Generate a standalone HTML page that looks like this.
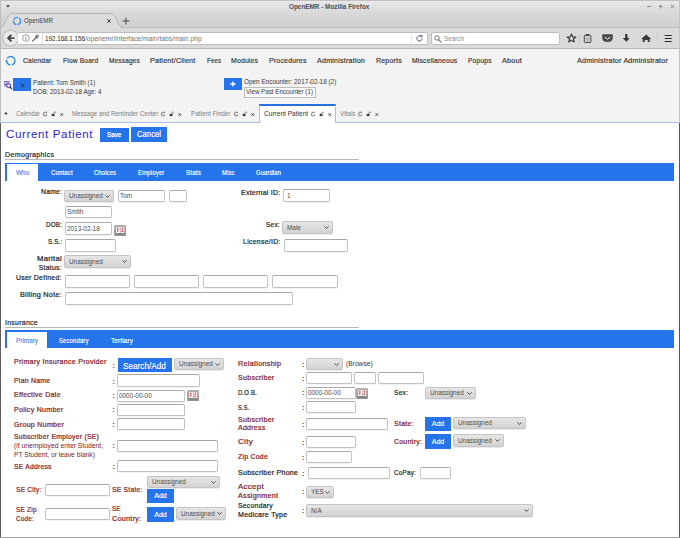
<!DOCTYPE html>
<html><head><meta charset="utf-8"><style>
html,body{margin:0;padding:0;width:680px;height:538px;overflow:hidden;background:#fff;}
body{position:relative;font-family:"Liberation Sans",sans-serif;}
body>div,body>svg{position:absolute;white-space:nowrap;}
</style></head><body>
<div style="left:0px;top:0px;width:680px;height:28px;background:linear-gradient(#e9e9e9,#d8d8d8 50%,#cfcfcf);border-radius:4px 4px 0 0;"></div>
<div style="left:0px;top:0px;width:680px;height:1px;background:#c2c2c2;border-radius:4px 4px 0 0;"></div>
<div style="left:288.75px;top:3.44px;font-size:6.40px;line-height:7.36px;color:#505050;font-weight:bold;transform:scaleX(0.9973);transform-origin:0 0;">OpenEMR - Mozilla Firefox</div>
<svg style="left:6px;top:5px" width="4" height="3" viewBox="0 0 4 3"><path d="M0 0.3 L4 0.3 L2 2.6Z" fill="#333"/></svg>
<svg style="left:646px;top:3px" width="30" height="7" viewBox="0 0 30 7"><path d="M1.2 3.5 H5.2" stroke="#777" stroke-width="0.8"/><path d="M14.7 1.5 V5.5 M12.7 3.5 H16.7" stroke="#777" stroke-width="0.8"/><path d="M24.7 1.7 L28.3 5.3 M28.3 1.7 L24.7 5.3" stroke="#777" stroke-width="0.8"/></svg>
<div style="left:0px;top:27px;width:680px;height:21px;background:#dadada;border-top:1px solid #bcbcbc;border-bottom:1px solid #b8b8b8;box-sizing:content-box;height:20px"></div>
<svg style="left:0px;top:12px" width="126" height="17" viewBox="0 0 126 17"><path d="M0 16 C5.5 16 6 1.5 12.5 1.5 L110.5 1.5 C117 1.5 117.5 16 123 16 L123 17 L0 17Z" fill="#dcdcdc" stroke="none"/><path d="M0 15.5 C5.5 15.5 6 1.5 12.5 1.5 L110.5 1.5 C117 1.5 117.5 15.5 123 15.5" fill="none" stroke="#b4b4b4" stroke-width="1"/></svg>
<div style="left:0px;top:28px;width:680px;height:1px;background:#dadada;"></div>
<svg style="left:12px;top:16px" width="10" height="10" viewBox="0 0 10 10"><circle cx="5" cy="5" r="3.6" fill="none" stroke="#3a8ee6" stroke-width="1.3" stroke-dasharray="5 1.2"/></svg>
<div style="left:24.00px;top:16.98px;font-size:7.40px;line-height:8.51px;color:#3c3c3c;transform:scaleX(0.8394);transform-origin:0 0;">OpenEMR</div>
<svg style="left:106px;top:18px" width="6" height="6" viewBox="0 0 6 6"><path d="M1.2 1.2 L4.8 4.8 M4.8 1.2 L1.2 4.8" stroke="#333" stroke-width="0.9"/></svg>
<svg style="left:122px;top:16.5px" width="8" height="8" viewBox="0 0 8 8"><path d="M4 0.5 V7.5 M0.5 4 H7.5" stroke="#444" stroke-width="1"/></svg>
<svg style="left:1px;top:29px" width="20" height="19" viewBox="0 0 20 19"><circle cx="9.6" cy="9.1" r="7.9" fill="#e9e9e9" stroke="#a9a9a9" stroke-width="0.8"/><path d="M13.4 9.1 H8" fill="none" stroke="#3a3a3a" stroke-width="1.5"/><path d="M10.4 5.9 L7.2 9.1 L10.4 12.3" fill="none" stroke="#3a3a3a" stroke-width="1.9"/></svg>
<div style="left:18px;top:32px;width:410px;height:13px;background:#fff;border:1px solid #bdbdbd;border-left:none;box-sizing:border-box;border-radius:0 2px 2px 0;"></div>
<svg style="left:21px;top:33px" width="20" height="10" viewBox="0 0 20 10"><circle cx="4.9" cy="5" r="3.3" fill="none" stroke="#777" stroke-width="0.7"/><path d="M4.9 4 V7" stroke="#777" stroke-width="0.8"/><circle cx="4.9" cy="3" r="0.4" fill="#777"/><ellipse cx="16" cy="3.5" rx="2.1" ry="1.6" transform="rotate(-45 16 3.5)" fill="#6a6a6a"/><circle cx="16.4" cy="3.1" r="0.6" fill="#fff"/><path d="M14.6 5 L11.2 8.4" stroke="#6a6a6a" stroke-width="1.3"/></svg>
<div style="left:42px;top:33px;width:1px;height:11px;background:#dcdcdc;"></div>
<div style="left:45.00px;top:34.76px;font-size:7.80px;line-height:8.97px;color:#222;transform:scaleX(0.8019);transform-origin:0 0;">192.168.1.156</div>
<div style="left:85.30px;top:34.76px;font-size:7.80px;line-height:8.97px;color:#737373;transform:scaleX(0.8627);transform-origin:0 0;">/openemr/interface/main/tabs/main.php</div>
<div style="left:411px;top:34px;width:1px;height:9px;background:#e4e4e4;"></div>
<svg style="left:415px;top:34px" width="9" height="9" viewBox="0 0 9 9"><path d="M7 4.5 A2.6 2.6 0 1 1 5.8 2.3" fill="none" stroke="#557" stroke-width="1"/><path d="M4.8 1 L7.6 1.2 L7 3.8Z" fill="#557"/></svg>
<div style="left:431px;top:32px;width:129px;height:13px;background:#fff;border:1px solid #bdbdbd;box-sizing:border-box;border-radius:2px;"></div>
<svg style="left:434px;top:34.5px" width="8" height="8" viewBox="0 0 8 8"><circle cx="3" cy="3" r="2.2" fill="none" stroke="#666" stroke-width="0.9"/><path d="M4.6 4.6 L7.3 7.3" stroke="#666" stroke-width="1.1"/></svg>
<div style="left:444.00px;top:34.86px;font-size:7.80px;line-height:8.97px;color:#8a8a8a;transform:scaleX(0.8093);transform-origin:0 0;">Search</div>
<svg style="left:566px;top:32px" width="110" height="13" viewBox="0 0 110 13"><path d="M5.5 2 L6.7 4.9 L9.8 5.1 L7.4 7 L8.2 10 L5.5 8.4 L2.8 10 L3.6 7 L1.2 5.1 L4.3 4.9Z" fill="none" stroke="#333" stroke-width="1.1" stroke-linejoin="round"/><rect x="13" y="1.5" width="0.8" height="10" fill="#c8c8c8"/><rect x="18.3" y="3.2" width="6.6" height="7.3" rx="0.8" fill="none" stroke="#4a4a4a" stroke-width="1"/><rect x="20" y="2" width="3.2" height="2" fill="#4a4a4a"/><path d="M20.2 5.5 V9.3 M21.6 5.5 V9.3 M23 5.5 V9.3" stroke="#888" stroke-width="0.6"/><path d="M37 2.3 H46 Q46.8 2.3 46.8 3.2 V5.5 Q46.8 10 41.5 10 Q36.2 10 36.2 5.5 V3.2 Q36.2 2.3 37 2.3Z" fill="#4a4a4a"/><path d="M39 5 L41.5 7.3 L44 5" fill="none" stroke="#fff" stroke-width="1"/><path d="M60.3 2 V7" stroke="#333" stroke-width="2.2"/><path d="M56.8 6 L60.3 9.8 L63.8 6Z" fill="#333"/><path d="M80.2 2.5 L85.2 7 H83.7 V10 H81.7 V8 H78.7 V10 H76.7 V7 H75.2Z" fill="#3a3a3a"/><rect x="91" y="1.5" width="0.8" height="10" fill="#c8c8c8"/><path d="M98.7 3.5 H105.7 M98.7 6.5 H105.7 M98.7 9.5 H105.7" stroke="#2a2a2a" stroke-width="1.2"/></svg>
<div style="left:0px;top:0px;width:1px;height:123px;background:#bdbdbd;"></div>
<div style="left:679px;top:0px;width:1px;height:123px;background:#c4c4c4;"></div>
<div style="left:0px;top:123px;width:1px;height:415px;background:#5e5e5e;"></div>
<div style="left:679px;top:123px;width:1px;height:415px;background:#555;"></div>
<div style="left:1px;top:49px;width:678px;height:73px;background:#f3f3f3;"></div>
<div style="left:1px;top:122px;width:678px;height:1px;background:#a9bff0;"></div>
<div style="left:1px;top:123px;width:678px;height:414px;background:#fff;"></div>
<div style="left:0px;top:537px;width:680px;height:1px;background:#a0a0a0;"></div>
<svg style="left:5px;top:55px" width="12" height="12" viewBox="0 0 12 12"><circle cx="5.7" cy="5.7" r="4.2" fill="none" stroke="#2a8ae0" stroke-width="1.4" stroke-dasharray="9.5 1.5 7 1.5 7 1.5" transform="rotate(-60 5.7 5.7)"/></svg>
<div style="left:23.00px;top:56.10px;font-size:7.90px;line-height:9.08px;color:#3a3a3a;transform:scaleX(0.8467);transform-origin:0 0;letter-spacing:0.2px;-webkit-text-stroke:0.2px #3a3a3a;">Calendar</div>
<div style="left:62.60px;top:56.10px;font-size:7.90px;line-height:9.08px;color:#3a3a3a;transform:scaleX(0.8438);transform-origin:0 0;letter-spacing:0.2px;-webkit-text-stroke:0.2px #3a3a3a;">Flow Board</div>
<div style="left:108.70px;top:56.10px;font-size:7.90px;line-height:9.08px;color:#3a3a3a;transform:scaleX(0.8244);transform-origin:0 0;letter-spacing:0.2px;-webkit-text-stroke:0.2px #3a3a3a;">Messages</div>
<div style="left:150.30px;top:56.10px;font-size:7.90px;line-height:9.08px;color:#3a3a3a;transform:scaleX(0.9139);transform-origin:0 0;letter-spacing:0.2px;-webkit-text-stroke:0.2px #3a3a3a;">Patient/Client</div>
<div style="left:206.60px;top:56.10px;font-size:7.90px;line-height:9.08px;color:#3a3a3a;transform:scaleX(0.7787);transform-origin:0 0;letter-spacing:0.2px;-webkit-text-stroke:0.2px #3a3a3a;">Fees</div>
<div style="left:231.00px;top:56.10px;font-size:7.90px;line-height:9.08px;color:#3a3a3a;transform:scaleX(0.8701);transform-origin:0 0;letter-spacing:0.2px;-webkit-text-stroke:0.2px #3a3a3a;">Modules</div>
<div style="left:268.70px;top:56.10px;font-size:7.90px;line-height:9.08px;color:#3a3a3a;transform:scaleX(0.8868);transform-origin:0 0;letter-spacing:0.2px;-webkit-text-stroke:0.2px #3a3a3a;">Procedures</div>
<div style="left:316.90px;top:56.10px;font-size:7.90px;line-height:9.08px;color:#3a3a3a;transform:scaleX(0.9100);transform-origin:0 0;letter-spacing:0.2px;-webkit-text-stroke:0.2px #3a3a3a;">Administration</div>
<div style="left:375.60px;top:56.10px;font-size:7.90px;line-height:9.08px;color:#3a3a3a;transform:scaleX(0.8912);transform-origin:0 0;letter-spacing:0.2px;-webkit-text-stroke:0.2px #3a3a3a;">Reports</div>
<div style="left:412.00px;top:56.10px;font-size:7.90px;line-height:9.08px;color:#3a3a3a;transform:scaleX(0.8641);transform-origin:0 0;letter-spacing:0.2px;-webkit-text-stroke:0.2px #3a3a3a;">Miscellaneous</div>
<div style="left:468.20px;top:56.10px;font-size:7.90px;line-height:9.08px;color:#3a3a3a;transform:scaleX(0.8466);transform-origin:0 0;letter-spacing:0.2px;-webkit-text-stroke:0.2px #3a3a3a;">Popups</div>
<div style="left:502.00px;top:56.10px;font-size:7.90px;line-height:9.08px;color:#3a3a3a;transform:scaleX(0.9194);transform-origin:0 0;letter-spacing:0.2px;-webkit-text-stroke:0.2px #3a3a3a;">About</div>
<div style="left:576.60px;top:56.10px;font-size:7.90px;line-height:9.08px;color:#3a3a3a;transform:scaleX(0.9089);transform-origin:0 0;letter-spacing:0.2px;-webkit-text-stroke:0.2px #3a3a3a;">Administrator Administrator</div>
<svg style="left:3px;top:80px" width="10" height="10" viewBox="0 0 10 10"><path d="M1 1.5 H6.5 M1 3 H6.5 M1 4.5 H4 M1 6 H3.5" stroke="#6a5ae0" stroke-width="0.9"/><circle cx="5.6" cy="5.6" r="2" fill="none" stroke="#2b2bb0" stroke-width="1"/><path d="M7 7 L9 9" stroke="#2b2bb0" stroke-width="1.2"/></svg>
<div style="left:13px;top:78px;width:18px;height:13px;background:#2674ec;"></div>
<svg style="left:19.5px;top:82.5px" width="5" height="5" viewBox="0 0 5 5"><path d="M0.6 0.6 L4.4 4.4 M4.4 0.6 L0.6 4.4" stroke="#2a2a2a" stroke-width="1"/></svg>
<div style="left:33.00px;top:79.03px;font-size:7.30px;line-height:8.39px;color:#383838;transform:scaleX(0.8643);transform-origin:0 0;">Patient: Tom Smith (1)</div>
<div style="left:33.00px;top:87.73px;font-size:7.30px;line-height:8.39px;color:#383838;transform:scaleX(0.8568);transform-origin:0 0;">DOB: 2013-02-18 Age: 4</div>
<div style="left:224px;top:78px;width:18px;height:12px;background:#2674ec;"></div>
<svg style="left:230px;top:81px" width="6" height="6" viewBox="0 0 6 6"><path d="M3 0.4 V5.6 M0.4 3 H5.6" stroke="#fff" stroke-width="1.4"/></svg>
<div style="left:244.20px;top:77.63px;font-size:7.30px;line-height:8.39px;color:#383838;transform:scaleX(0.8748);transform-origin:0 0;">Open Encounter: 2017-02-18 (2)</div>
<div style="left:244px;top:87px;width:72px;height:11px;background:#fbfbfb;border:1px solid #bdbdbd;box-sizing:border-box;"></div>
<div style="left:246.00px;top:88.43px;font-size:7.30px;line-height:8.39px;color:#383838;transform:scaleX(0.8526);transform-origin:0 0;">View Past Encounter (1)</div>
<svg style="left:4px;top:111.5px" width="4" height="3" viewBox="0 0 4 3"><path d="M0.2 2.3 L1.6 0.5 Q2 0.1 2.4 0.5 L3.6 2.3Z" fill="#222"/></svg>
<div style="left:15.50px;top:109.96px;font-size:6.90px;line-height:7.93px;color:#7e7e7e;transform:scaleX(0.8464);transform-origin:0 0;">Calendar</div>
<svg style="left:43px;top:111px" width="22" height="7" viewBox="0 0 22 7"><path d="M3.9 3.2 A1.9 1.9 0 1 1 3.1 1.6" fill="none" stroke="#666" stroke-width="0.8"/><path d="M2.6 0.5 L4.2 0.9 L3.7 2.2Z" fill="#666"/><path d="M0.9 3.8 A1.9 1.9 0 0 0 1.3 2.2" fill="none" stroke="#666" stroke-width="0.6"/><rect x="8.7" y="2.8" width="2.8" height="2.3" fill="#3a3a3a"/><path d="M11 2.8 V1.9 Q11 0.9 11.9 0.9 Q12.8 0.9 12.8 1.9" fill="none" stroke="#555" stroke-width="0.6"/><path d="M17.4 2.2 L20.1 4.9 M20.1 2.2 L17.4 4.9" stroke="#444" stroke-width="0.9"/></svg>
<div style="left:72.30px;top:109.96px;font-size:6.90px;line-height:7.93px;color:#7e7e7e;transform:scaleX(0.9016);transform-origin:0 0;">Message and Reminder Center</div>
<svg style="left:161px;top:111px" width="22" height="7" viewBox="0 0 22 7"><path d="M3.9 3.2 A1.9 1.9 0 1 1 3.1 1.6" fill="none" stroke="#666" stroke-width="0.8"/><path d="M2.6 0.5 L4.2 0.9 L3.7 2.2Z" fill="#666"/><path d="M0.9 3.8 A1.9 1.9 0 0 0 1.3 2.2" fill="none" stroke="#666" stroke-width="0.6"/><rect x="8.7" y="2.8" width="2.8" height="2.3" fill="#3a3a3a"/><path d="M11 2.8 V1.9 Q11 0.9 11.9 0.9 Q12.8 0.9 12.8 1.9" fill="none" stroke="#555" stroke-width="0.6"/><path d="M17.4 2.2 L20.1 4.9 M20.1 2.2 L17.4 4.9" stroke="#444" stroke-width="0.9"/></svg>
<div style="left:191.20px;top:109.96px;font-size:6.90px;line-height:7.93px;color:#7e7e7e;transform:scaleX(0.9172);transform-origin:0 0;">Patient Finder</div>
<svg style="left:234px;top:111px" width="22" height="7" viewBox="0 0 22 7"><path d="M3.9 3.2 A1.9 1.9 0 1 1 3.1 1.6" fill="none" stroke="#666" stroke-width="0.8"/><path d="M2.6 0.5 L4.2 0.9 L3.7 2.2Z" fill="#666"/><path d="M0.9 3.8 A1.9 1.9 0 0 0 1.3 2.2" fill="none" stroke="#666" stroke-width="0.6"/><rect x="8.7" y="2.8" width="2.8" height="2.3" fill="#3a3a3a"/><path d="M11 2.8 V1.9 Q11 0.9 11.9 0.9 Q12.8 0.9 12.8 1.9" fill="none" stroke="#555" stroke-width="0.6"/><path d="M17.4 2.2 L20.1 4.9 M20.1 2.2 L17.4 4.9" stroke="#444" stroke-width="0.9"/></svg>
<div style="left:259px;top:104px;width:77px;height:19px;background:#fff;border:1px solid #a9bff0;border-top:2px solid #2a6fe0;border-bottom:none;box-sizing:border-box;"></div>
<div style="left:263.80px;top:109.96px;font-size:6.90px;line-height:7.93px;color:#333;transform:scaleX(0.9524);transform-origin:0 0;">Current Patient</div>
<svg style="left:310.5px;top:111px" width="22" height="7" viewBox="0 0 22 7"><path d="M3.9 3.2 A1.9 1.9 0 1 1 3.1 1.6" fill="none" stroke="#666" stroke-width="0.8"/><path d="M2.6 0.5 L4.2 0.9 L3.7 2.2Z" fill="#666"/><path d="M0.9 3.8 A1.9 1.9 0 0 0 1.3 2.2" fill="none" stroke="#666" stroke-width="0.6"/><rect x="8.7" y="2.8" width="2.8" height="2.3" fill="#3a3a3a"/><path d="M11 2.8 V1.9 Q11 0.9 11.9 0.9 Q12.8 0.9 12.8 1.9" fill="none" stroke="#555" stroke-width="0.6"/><path d="M17.4 2.2 L20.1 4.9 M20.1 2.2 L17.4 4.9" stroke="#444" stroke-width="0.9"/></svg>
<div style="left:340.30px;top:109.96px;font-size:6.90px;line-height:7.93px;color:#7e7e7e;transform:scaleX(0.9314);transform-origin:0 0;">Vitals</div>
<svg style="left:358px;top:111px" width="22" height="7" viewBox="0 0 22 7"><path d="M3.9 3.2 A1.9 1.9 0 1 1 3.1 1.6" fill="none" stroke="#666" stroke-width="0.8"/><path d="M2.6 0.5 L4.2 0.9 L3.7 2.2Z" fill="#666"/><path d="M0.9 3.8 A1.9 1.9 0 0 0 1.3 2.2" fill="none" stroke="#666" stroke-width="0.6"/><rect x="8.7" y="2.8" width="2.8" height="2.3" fill="#3a3a3a"/><path d="M11 2.8 V1.9 Q11 0.9 11.9 0.9 Q12.8 0.9 12.8 1.9" fill="none" stroke="#555" stroke-width="0.6"/><path d="M17.4 2.2 L20.1 4.9 M20.1 2.2 L17.4 4.9" stroke="#444" stroke-width="0.9"/></svg>
<div style="left:6.00px;top:128.46px;font-size:11.20px;line-height:12.88px;color:#3322cc;transform:scaleX(1.0341);transform-origin:0 0;letter-spacing:0.6px;">Current Patient</div>
<div style="left:100px;top:128px;width:29px;height:14px;background:#2674ec;"></div>
<div style="left:106.80px;top:131.10px;font-size:7.00px;line-height:8.05px;color:#fff;transform:scaleX(0.8743);transform-origin:0 0;letter-spacing:0.1px;-webkit-text-stroke:0.25px #fff;">Save</div>
<div style="left:131px;top:127px;width:36px;height:15px;background:#2674ec;"></div>
<div style="left:136.80px;top:128.88px;font-size:9.20px;line-height:10.58px;color:#fff;transform:scaleX(0.8243);transform-origin:0 0;letter-spacing:0.1px;-webkit-text-stroke:0.2px #fff;">Cancel</div>
<div style="left:5.30px;top:150.56px;font-size:6.90px;line-height:7.93px;color:#2a2a2a;transform:scaleX(1.0294);transform-origin:0 0;letter-spacing:0.3px;-webkit-text-stroke:0.2px #2a2a2a;">Demographics</div>
<div style="left:5px;top:159px;width:354px;height:1px;background:#b8b8b8;"></div>
<div style="left:5px;top:163px;width:669px;height:18px;background:#2674ec;"></div>
<div style="left:7px;top:164px;width:31px;height:17px;background:#fff;"></div>
<div style="left:16.00px;top:168.90px;font-size:7.00px;line-height:8.05px;color:#4f86e6;transform:scaleX(0.9171);transform-origin:0 0;-webkit-text-stroke:0.15px #4f86e6;">Who</div>
<div style="left:50.60px;top:168.70px;font-size:7.00px;line-height:8.05px;color:#fff;transform:scaleX(0.8620);transform-origin:0 0;letter-spacing:0.15px;-webkit-text-stroke:0.15px #fff;">Contact</div>
<div style="left:94.40px;top:168.70px;font-size:7.00px;line-height:8.05px;color:#fff;transform:scaleX(0.8390);transform-origin:0 0;letter-spacing:0.15px;-webkit-text-stroke:0.15px #fff;">Choices</div>
<div style="left:138.00px;top:168.70px;font-size:7.00px;line-height:8.05px;color:#fff;transform:scaleX(0.8613);transform-origin:0 0;letter-spacing:0.15px;-webkit-text-stroke:0.15px #fff;">Employer</div>
<div style="left:185.75px;top:168.70px;font-size:7.00px;line-height:8.05px;color:#fff;transform:scaleX(0.8981);transform-origin:0 0;letter-spacing:0.15px;-webkit-text-stroke:0.15px #fff;">Stats</div>
<div style="left:221.75px;top:168.70px;font-size:7.00px;line-height:8.05px;color:#fff;transform:scaleX(0.8341);transform-origin:0 0;letter-spacing:0.15px;-webkit-text-stroke:0.15px #fff;">Misc</div>
<div style="left:256.25px;top:168.70px;font-size:7.00px;line-height:8.05px;color:#fff;transform:scaleX(0.8334);transform-origin:0 0;letter-spacing:0.15px;-webkit-text-stroke:0.15px #fff;">Guardian</div>
<div style="left:40.75px;top:188.16px;font-size:6.90px;line-height:7.93px;color:#222;transform:scaleX(0.9850);transform-origin:0 0;letter-spacing:0.25px;-webkit-text-stroke:0.2px #222;">Name:</div>
<div style="left:64px;top:190px;width:50px;height:12px;background:linear-gradient(#e6e6e6,#d3d3d3);border:1px solid #c4c4c4;box-sizing:border-box;border-radius:2px;box-shadow:0 1px 0 rgba(0,0,0,0.08);"></div>
<div style="left:68.70px;top:192.29px;font-size:7.20px;line-height:8.28px;color:#4d4d4d;transform:scaleX(0.8900);transform-origin:0 0;">Unassigned</div>
<svg style="left:104.7px;top:194.5px" width="5" height="3" viewBox="0 0 5 3"><path d="M0.4 0.4 L2.5 2.4 L4.6 0.4" fill="none" stroke="#4a4a4a" stroke-width="1"/></svg>
<div style="left:118px;top:190px;width:47px;height:12px;background:#fff;border:1px solid #c2c2c2;border-top-color:#a8a8a8;box-sizing:border-box;border-radius:2px;box-shadow:0 1px 0 rgba(0,0,0,0.05);"></div>
<div style="left:120.30px;top:191.79px;font-size:7.20px;line-height:8.28px;color:#4a4a4a;transform:scaleX(0.8900);transform-origin:0 0;">Tom</div>
<div style="left:169px;top:190px;width:18px;height:12px;background:#fff;border:1px solid #c2c2c2;border-top-color:#a8a8a8;box-sizing:border-box;border-radius:2px;box-shadow:0 1px 0 rgba(0,0,0,0.05);"></div>
<div style="left:65px;top:206px;width:47px;height:12px;background:#fff;border:1px solid #c2c2c2;border-top-color:#a8a8a8;box-sizing:border-box;border-radius:2px;box-shadow:0 1px 0 rgba(0,0,0,0.05);"></div>
<div style="left:67.30px;top:208.04px;font-size:7.20px;line-height:8.28px;color:#4a4a4a;transform:scaleX(0.8900);transform-origin:0 0;">Smith</div>
<div style="left:45.75px;top:221.16px;font-size:6.90px;line-height:7.93px;color:#222;transform:scaleX(0.9094);transform-origin:0 0;letter-spacing:0.25px;-webkit-text-stroke:0.2px #222;">DOB:</div>
<div style="left:65px;top:222px;width:47px;height:13px;background:#fff;border:1px solid #c2c2c2;border-top-color:#a8a8a8;box-sizing:border-box;border-radius:2px;box-shadow:0 1px 0 rgba(0,0,0,0.05);"></div>
<div style="left:67.30px;top:225.04px;font-size:7.20px;line-height:8.28px;color:#4a4a4a;transform:scaleX(0.8900);transform-origin:0 0;">2013-02-18</div>
<svg style="left:113.5px;top:225px" width="12.3" height="11.3" viewBox="0 0 13 12"><defs><linearGradient id="cg1" x1="0" y1="0" x2="0" y2="1"><stop offset="0" stop-color="#b4b4b4"/><stop offset="1" stop-color="#8a8a8a"/></linearGradient></defs><rect x="0.4" y="0.4" width="12.2" height="11.2" rx="1.3" fill="url(#cg1)" stroke="#9a9a9a" stroke-width="0.8"/><rect x="2.2" y="2.2" width="8.6" height="6.3" fill="#fafafa"/><path d="M3.2 3 L4.6 2.6 V7.2 H3.4 V4 Z" fill="#e84040"/><path d="M8 3 Q9.8 2.2 9.8 4 Q9.8 5 8.4 6.3 H10 V7.2 H7.6 V6.3 Q9 5 9 4 Q9 3.4 8 3.8Z" fill="#d83030"/><rect x="6.2" y="2.2" width="0.7" height="6.3" fill="#9a9a9a"/><rect x="2.2" y="8.7" width="8.6" height="1.3" fill="#707070" opacity="0.5"/></svg>
<div style="left:47.50px;top:238.16px;font-size:6.90px;line-height:7.93px;color:#222;transform:scaleX(0.8948);transform-origin:0 0;letter-spacing:0.25px;-webkit-text-stroke:0.2px #222;">S.S.:</div>
<div style="left:65px;top:239px;width:51px;height:13px;background:#fff;border:1px solid #c2c2c2;border-top-color:#a8a8a8;box-sizing:border-box;border-radius:2px;box-shadow:0 1px 0 rgba(0,0,0,0.05);"></div>
<div style="left:37.00px;top:255.16px;font-size:6.90px;line-height:7.93px;color:#222;transform:scaleX(1.1134);transform-origin:0 0;letter-spacing:0.25px;-webkit-text-stroke:0.2px #222;">Marital</div>
<div style="left:38.75px;top:263.66px;font-size:6.90px;line-height:7.93px;color:#222;letter-spacing:0.25px;-webkit-text-stroke:0.2px #222;">Status:</div>
<div style="left:64px;top:255px;width:67px;height:13px;background:linear-gradient(#e6e6e6,#d3d3d3);border:1px solid #c4c4c4;box-sizing:border-box;border-radius:2px;box-shadow:0 1px 0 rgba(0,0,0,0.08);"></div>
<div style="left:68.70px;top:257.79px;font-size:7.20px;line-height:8.28px;color:#4d4d4d;transform:scaleX(0.8900);transform-origin:0 0;">Unassigned</div>
<svg style="left:121.7px;top:260.0px" width="5" height="3" viewBox="0 0 5 3"><path d="M0.4 0.4 L2.5 2.4 L4.6 0.4" fill="none" stroke="#4a4a4a" stroke-width="1"/></svg>
<div style="left:16.25px;top:273.66px;font-size:6.90px;line-height:7.93px;color:#222;transform:scaleX(1.0069);transform-origin:0 0;letter-spacing:0.25px;-webkit-text-stroke:0.2px #222;">User Defined:</div>
<div style="left:65px;top:275px;width:65px;height:13px;background:#fff;border:1px solid #c2c2c2;border-top-color:#a8a8a8;box-sizing:border-box;border-radius:2px;box-shadow:0 1px 0 rgba(0,0,0,0.05);"></div>
<div style="left:134px;top:275px;width:65px;height:13px;background:#fff;border:1px solid #c2c2c2;border-top-color:#a8a8a8;box-sizing:border-box;border-radius:2px;box-shadow:0 1px 0 rgba(0,0,0,0.05);"></div>
<div style="left:203px;top:275px;width:65px;height:13px;background:#fff;border:1px solid #c2c2c2;border-top-color:#a8a8a8;box-sizing:border-box;border-radius:2px;box-shadow:0 1px 0 rgba(0,0,0,0.05);"></div>
<div style="left:272px;top:275px;width:66px;height:13px;background:#fff;border:1px solid #c2c2c2;border-top-color:#a8a8a8;box-sizing:border-box;border-radius:2px;box-shadow:0 1px 0 rgba(0,0,0,0.05);"></div>
<div style="left:20.00px;top:291.16px;font-size:6.90px;line-height:7.93px;color:#222;transform:scaleX(1.0482);transform-origin:0 0;letter-spacing:0.25px;-webkit-text-stroke:0.2px #222;">Billing Note:</div>
<div style="left:65px;top:292px;width:228px;height:13px;background:#fff;border:1px solid #c2c2c2;border-top-color:#a8a8a8;box-sizing:border-box;border-radius:2px;box-shadow:0 1px 0 rgba(0,0,0,0.05);"></div>
<div style="left:240.70px;top:188.76px;font-size:6.90px;line-height:7.93px;color:#222;transform:scaleX(1.0142);transform-origin:0 0;letter-spacing:0.25px;-webkit-text-stroke:0.2px #222;">External ID:</div>
<div style="left:283px;top:189px;width:47px;height:13px;background:#fff;border:1px solid #c2c2c2;border-top-color:#a8a8a8;box-sizing:border-box;border-radius:2px;box-shadow:0 1px 0 rgba(0,0,0,0.05);"></div>
<div style="left:286.50px;top:191.99px;font-size:7.20px;line-height:8.28px;color:#4a4a4a;transform:scaleX(0.8900);transform-origin:0 0;">1</div>
<div style="left:266.40px;top:220.86px;font-size:6.90px;line-height:7.93px;color:#222;transform:scaleX(0.9388);transform-origin:0 0;letter-spacing:0.25px;-webkit-text-stroke:0.2px #222;">Sex:</div>
<div style="left:282px;top:221px;width:51px;height:13px;background:linear-gradient(#e6e6e6,#d3d3d3);border:1px solid #c4c4c4;box-sizing:border-box;border-radius:2px;box-shadow:0 1px 0 rgba(0,0,0,0.08);"></div>
<div style="left:286.70px;top:223.79px;font-size:7.20px;line-height:8.28px;color:#4d4d4d;transform:scaleX(0.8900);transform-origin:0 0;">Male</div>
<svg style="left:323.7px;top:226.0px" width="5" height="3" viewBox="0 0 5 3"><path d="M0.4 0.4 L2.5 2.4 L4.6 0.4" fill="none" stroke="#4a4a4a" stroke-width="1"/></svg>
<div style="left:242.60px;top:238.16px;font-size:6.90px;line-height:7.93px;color:#222;transform:scaleX(1.0116);transform-origin:0 0;letter-spacing:0.25px;-webkit-text-stroke:0.2px #222;">License/ID:</div>
<div style="left:284px;top:239px;width:64px;height:13px;background:#fff;border:1px solid #c2c2c2;border-top-color:#a8a8a8;box-sizing:border-box;border-radius:2px;box-shadow:0 1px 0 rgba(0,0,0,0.05);"></div>
<div style="left:5.00px;top:318.66px;font-size:6.90px;line-height:7.93px;color:#2a2a2a;letter-spacing:0.3px;-webkit-text-stroke:0.2px #2a2a2a;">Insurance</div>
<div style="left:5px;top:327px;width:354px;height:1px;background:#b8b8b8;"></div>
<div style="left:5px;top:330px;width:669px;height:18px;background:#2674ec;"></div>
<div style="left:7px;top:332px;width:40px;height:16px;background:#fff;"></div>
<div style="left:16.00px;top:336.80px;font-size:7.00px;line-height:8.05px;color:#4f86e6;transform:scaleX(0.9125);transform-origin:0 0;-webkit-text-stroke:0.15px #4f86e6;">Primary</div>
<div style="left:59.25px;top:336.60px;font-size:7.00px;line-height:8.05px;color:#fff;transform:scaleX(0.8473);transform-origin:0 0;letter-spacing:0.15px;-webkit-text-stroke:0.15px #fff;">Secondary</div>
<div style="left:110.50px;top:336.60px;font-size:7.00px;line-height:8.05px;color:#fff;transform:scaleX(0.9110);transform-origin:0 0;letter-spacing:0.15px;-webkit-text-stroke:0.15px #fff;">Tertiary</div>
<div style="left:14.25px;top:357.91px;font-size:6.90px;line-height:7.93px;color:#7d1a1e;transform:scaleX(1.0295);transform-origin:0 0;letter-spacing:0.25px;-webkit-text-stroke:0.2px #7d1a1e;">Primary Insurance Provider</div>
<div style="left:112.50px;top:361.60px;font-size:7.00px;line-height:8.05px;color:#7d1a1e;font-weight:bold;">:</div>
<div style="left:118px;top:358px;width:54px;height:14px;background:#2674ec;"></div>
<div style="left:123.20px;top:359.65px;font-size:9.60px;line-height:11.04px;color:#fff;transform:scaleX(0.8552);transform-origin:0 0;-webkit-text-stroke:0.15px #fff;">Search/Add</div>
<div style="left:174px;top:358px;width:50px;height:12px;background:linear-gradient(#e6e6e6,#d3d3d3);border:1px solid #c4c4c4;box-sizing:border-box;border-radius:2px;box-shadow:0 1px 0 rgba(0,0,0,0.08);"></div>
<div style="left:178.70px;top:360.29px;font-size:7.20px;line-height:8.28px;color:#4d4d4d;transform:scaleX(0.8900);transform-origin:0 0;">Unassigned</div>
<svg style="left:214.7px;top:362.5px" width="5" height="3" viewBox="0 0 5 3"><path d="M0.4 0.4 L2.5 2.4 L4.6 0.4" fill="none" stroke="#4a4a4a" stroke-width="1"/></svg>
<div style="left:14.25px;top:376.91px;font-size:6.90px;line-height:7.93px;color:#7d1a1e;transform:scaleX(1.0032);transform-origin:0 0;letter-spacing:0.25px;-webkit-text-stroke:0.2px #7d1a1e;">Plan Name</div>
<div style="left:112.50px;top:377.60px;font-size:7.00px;line-height:8.05px;color:#7d1a1e;font-weight:bold;">:</div>
<div style="left:117px;top:374px;width:83px;height:13px;background:#fff;border:1px solid #c2c2c2;border-top-color:#a8a8a8;box-sizing:border-box;border-radius:2px;box-shadow:0 1px 0 rgba(0,0,0,0.05);"></div>
<div style="left:14.25px;top:391.41px;font-size:6.90px;line-height:7.93px;color:#7d1a1e;transform:scaleX(1.0145);transform-origin:0 0;letter-spacing:0.25px;-webkit-text-stroke:0.2px #7d1a1e;">Effective Date</div>
<div style="left:112.50px;top:392.10px;font-size:7.00px;line-height:8.05px;color:#7d1a1e;font-weight:bold;">:</div>
<div style="left:117px;top:390px;width:68px;height:12px;background:#fff;border:1px solid #c2c2c2;border-top-color:#a8a8a8;box-sizing:border-box;border-radius:2px;box-shadow:0 1px 0 rgba(0,0,0,0.05);"></div>
<div style="left:119.30px;top:392.04px;font-size:7.20px;line-height:8.28px;color:#4a4a4a;transform:scaleX(0.8900);transform-origin:0 0;">0000-00-00</div>
<svg style="left:187px;top:390px" width="12.3" height="11.3" viewBox="0 0 13 12"><defs><linearGradient id="cg2" x1="0" y1="0" x2="0" y2="1"><stop offset="0" stop-color="#b4b4b4"/><stop offset="1" stop-color="#8a8a8a"/></linearGradient></defs><rect x="0.4" y="0.4" width="12.2" height="11.2" rx="1.3" fill="url(#cg2)" stroke="#9a9a9a" stroke-width="0.8"/><rect x="2.2" y="2.2" width="8.6" height="6.3" fill="#fafafa"/><path d="M3.2 3 L4.6 2.6 V7.2 H3.4 V4 Z" fill="#e84040"/><path d="M8 3 Q9.8 2.2 9.8 4 Q9.8 5 8.4 6.3 H10 V7.2 H7.6 V6.3 Q9 5 9 4 Q9 3.4 8 3.8Z" fill="#d83030"/><rect x="6.2" y="2.2" width="0.7" height="6.3" fill="#9a9a9a"/><rect x="2.2" y="8.7" width="8.6" height="1.3" fill="#707070" opacity="0.5"/></svg>
<div style="left:14.25px;top:405.66px;font-size:6.90px;line-height:7.93px;color:#7d1a1e;transform:scaleX(1.0288);transform-origin:0 0;letter-spacing:0.25px;-webkit-text-stroke:0.2px #7d1a1e;">Policy Number</div>
<div style="left:112.50px;top:406.10px;font-size:7.00px;line-height:8.05px;color:#7d1a1e;font-weight:bold;">:</div>
<div style="left:117px;top:404px;width:68px;height:12px;background:#fff;border:1px solid #c2c2c2;border-top-color:#a8a8a8;box-sizing:border-box;border-radius:2px;box-shadow:0 1px 0 rgba(0,0,0,0.05);"></div>
<div style="left:14.25px;top:421.16px;font-size:6.90px;line-height:7.93px;color:#7d1a1e;transform:scaleX(1.0332);transform-origin:0 0;letter-spacing:0.25px;-webkit-text-stroke:0.2px #7d1a1e;">Group Number</div>
<div style="left:112.50px;top:421.10px;font-size:7.00px;line-height:8.05px;color:#7d1a1e;font-weight:bold;">:</div>
<div style="left:117px;top:418px;width:68px;height:12px;background:#fff;border:1px solid #c2c2c2;border-top-color:#a8a8a8;box-sizing:border-box;border-radius:2px;box-shadow:0 1px 0 rgba(0,0,0,0.05);"></div>
<div style="left:14.25px;top:433.06px;font-size:6.90px;line-height:7.93px;color:#7d1a1e;transform:scaleX(0.9941);transform-origin:0 0;letter-spacing:0.25px;-webkit-text-stroke:0.2px #7d1a1e;">Subscriber Employer (SE)</div>
<div style="left:14.00px;top:441.66px;font-size:6.90px;line-height:7.93px;color:#7d1a1e;transform:scaleX(0.9859);transform-origin:0 0;">(if unemployed enter Student,</div>
<div style="left:14.00px;top:450.86px;font-size:6.90px;line-height:7.93px;color:#7d1a1e;transform:scaleX(0.9702);transform-origin:0 0;">PT Student, or leave blank)</div>
<div style="left:112.50px;top:442.10px;font-size:7.00px;line-height:8.05px;color:#7d1a1e;font-weight:bold;">:</div>
<div style="left:117px;top:440px;width:101px;height:12px;background:#fff;border:1px solid #c2c2c2;border-top-color:#a8a8a8;box-sizing:border-box;border-radius:2px;box-shadow:0 1px 0 rgba(0,0,0,0.05);"></div>
<div style="left:14.25px;top:463.26px;font-size:6.90px;line-height:7.93px;color:#7d1a1e;transform:scaleX(0.9792);transform-origin:0 0;letter-spacing:0.25px;-webkit-text-stroke:0.2px #7d1a1e;">SE Address</div>
<div style="left:112.50px;top:463.10px;font-size:7.00px;line-height:8.05px;color:#7d1a1e;font-weight:bold;">:</div>
<div style="left:117px;top:460px;width:101px;height:12px;background:#fff;border:1px solid #c2c2c2;border-top-color:#a8a8a8;box-sizing:border-box;border-radius:2px;box-shadow:0 1px 0 rgba(0,0,0,0.05);"></div>
<div style="left:15.50px;top:486.16px;font-size:6.90px;line-height:7.93px;color:#7d1a1e;transform:scaleX(0.9565);transform-origin:0 0;letter-spacing:0.25px;-webkit-text-stroke:0.2px #7d1a1e;">SE City:</div>
<div style="left:45px;top:484px;width:65px;height:12px;background:#fff;border:1px solid #c2c2c2;border-top-color:#a8a8a8;box-sizing:border-box;border-radius:2px;box-shadow:0 1px 0 rgba(0,0,0,0.05);"></div>
<div style="left:111.75px;top:486.16px;font-size:6.90px;line-height:7.93px;color:#7d1a1e;transform:scaleX(0.9793);transform-origin:0 0;letter-spacing:0.25px;-webkit-text-stroke:0.2px #7d1a1e;">SE State:</div>
<div style="left:147px;top:476px;width:73px;height:12px;background:linear-gradient(#e6e6e6,#d3d3d3);border:1px solid #c4c4c4;box-sizing:border-box;border-radius:2px;box-shadow:0 1px 0 rgba(0,0,0,0.08);"></div>
<div style="left:151.70px;top:478.29px;font-size:7.20px;line-height:8.28px;color:#4d4d4d;transform:scaleX(0.8900);transform-origin:0 0;">Unassigned</div>
<svg style="left:210.7px;top:480.5px" width="5" height="3" viewBox="0 0 5 3"><path d="M0.4 0.4 L2.5 2.4 L4.6 0.4" fill="none" stroke="#4a4a4a" stroke-width="1"/></svg>
<div style="left:147px;top:489px;width:27px;height:14px;background:#2674ec;"></div>
<div style="left:154.27px;top:492.40px;font-size:7.00px;line-height:8.05px;color:#fff;-webkit-text-stroke:0.15px #fff;">Add</div>
<div style="left:15.50px;top:505.66px;font-size:6.90px;line-height:7.93px;color:#7d1a1e;transform:scaleX(0.9344);transform-origin:0 0;letter-spacing:0.25px;-webkit-text-stroke:0.2px #7d1a1e;">SE Zip</div>
<div style="left:15.50px;top:515.06px;font-size:6.90px;line-height:7.93px;color:#7d1a1e;transform:scaleX(0.9155);transform-origin:0 0;letter-spacing:0.25px;-webkit-text-stroke:0.2px #7d1a1e;">Code:</div>
<div style="left:45px;top:508px;width:65px;height:12px;background:#fff;border:1px solid #c2c2c2;border-top-color:#a8a8a8;box-sizing:border-box;border-radius:2px;box-shadow:0 1px 0 rgba(0,0,0,0.05);"></div>
<div style="left:111.75px;top:505.46px;font-size:6.90px;line-height:7.93px;color:#7d1a1e;transform:scaleX(0.9016);transform-origin:0 0;letter-spacing:0.25px;-webkit-text-stroke:0.2px #7d1a1e;">SE</div>
<div style="left:111.75px;top:514.96px;font-size:6.90px;line-height:7.93px;color:#7d1a1e;transform:scaleX(1.0507);transform-origin:0 0;letter-spacing:0.25px;-webkit-text-stroke:0.2px #7d1a1e;">Country:</div>
<div style="left:147px;top:507px;width:27px;height:15px;background:#2674ec;"></div>
<div style="left:154.27px;top:510.90px;font-size:7.00px;line-height:8.05px;color:#fff;-webkit-text-stroke:0.15px #fff;">Add</div>
<div style="left:176px;top:507px;width:50px;height:13px;background:linear-gradient(#e6e6e6,#d3d3d3);border:1px solid #c4c4c4;box-sizing:border-box;border-radius:2px;box-shadow:0 1px 0 rgba(0,0,0,0.08);"></div>
<div style="left:180.70px;top:509.79px;font-size:7.20px;line-height:8.28px;color:#4d4d4d;transform:scaleX(0.8900);transform-origin:0 0;">Unassigned</div>
<svg style="left:216.7px;top:512.0px" width="5" height="3" viewBox="0 0 5 3"><path d="M0.4 0.4 L2.5 2.4 L4.6 0.4" fill="none" stroke="#4a4a4a" stroke-width="1"/></svg>
<div style="left:238.00px;top:359.91px;font-size:6.90px;line-height:7.93px;color:#7d1a1e;transform:scaleX(1.0556);transform-origin:0 0;letter-spacing:0.25px;-webkit-text-stroke:0.2px #7d1a1e;">Relationship</div>
<div style="left:302.00px;top:360.60px;font-size:7.00px;line-height:8.05px;color:#7d1a1e;font-weight:bold;">:</div>
<div style="left:306px;top:358px;width:37px;height:12px;background:linear-gradient(#e6e6e6,#d3d3d3);border:1px solid #c4c4c4;box-sizing:border-box;border-radius:2px;box-shadow:0 1px 0 rgba(0,0,0,0.08);"></div>
<svg style="left:333.7px;top:362.5px" width="5" height="3" viewBox="0 0 5 3"><path d="M0.4 0.4 L2.5 2.4 L4.6 0.4" fill="none" stroke="#4a4a4a" stroke-width="1"/></svg>
<div style="left:346.25px;top:359.91px;font-size:6.90px;line-height:7.93px;color:#333;transform:scaleX(0.9691);transform-origin:0 0;">(Browse)</div>
<div style="left:238.00px;top:374.16px;font-size:6.90px;line-height:7.93px;color:#7d1a1e;transform:scaleX(1.0287);transform-origin:0 0;letter-spacing:0.25px;-webkit-text-stroke:0.2px #7d1a1e;">Subscriber</div>
<div style="left:302.00px;top:374.60px;font-size:7.00px;line-height:8.05px;color:#7d1a1e;font-weight:bold;">:</div>
<div style="left:306px;top:372px;width:46px;height:12px;background:#fff;border:1px solid #c2c2c2;border-top-color:#a8a8a8;box-sizing:border-box;border-radius:2px;box-shadow:0 1px 0 rgba(0,0,0,0.05);"></div>
<div style="left:354px;top:372px;width:22px;height:12px;background:#fff;border:1px solid #c2c2c2;border-top-color:#a8a8a8;box-sizing:border-box;border-radius:2px;box-shadow:0 1px 0 rgba(0,0,0,0.05);"></div>
<div style="left:378px;top:372px;width:46px;height:12px;background:#fff;border:1px solid #c2c2c2;border-top-color:#a8a8a8;box-sizing:border-box;border-radius:2px;box-shadow:0 1px 0 rgba(0,0,0,0.05);"></div>
<div style="left:238.00px;top:388.66px;font-size:6.90px;line-height:7.93px;color:#222;transform:scaleX(0.8557);transform-origin:0 0;letter-spacing:0.25px;-webkit-text-stroke:0.2px #222;">D.O.B.</div>
<div style="left:302.00px;top:389.10px;font-size:7.00px;line-height:8.05px;color:#7d1a1e;font-weight:bold;">:</div>
<div style="left:306px;top:387px;width:50px;height:12px;background:#fff;border:1px solid #c2c2c2;border-top-color:#a8a8a8;box-sizing:border-box;border-radius:2px;box-shadow:0 1px 0 rgba(0,0,0,0.05);"></div>
<div style="left:308.30px;top:389.04px;font-size:7.20px;line-height:8.28px;color:#4a4a4a;transform:scaleX(0.8900);transform-origin:0 0;">0000-00-00</div>
<svg style="left:356px;top:388px" width="12.3" height="11.3" viewBox="0 0 13 12"><defs><linearGradient id="cg3" x1="0" y1="0" x2="0" y2="1"><stop offset="0" stop-color="#b4b4b4"/><stop offset="1" stop-color="#8a8a8a"/></linearGradient></defs><rect x="0.4" y="0.4" width="12.2" height="11.2" rx="1.3" fill="url(#cg3)" stroke="#9a9a9a" stroke-width="0.8"/><rect x="2.2" y="2.2" width="8.6" height="6.3" fill="#fafafa"/><path d="M3.2 3 L4.6 2.6 V7.2 H3.4 V4 Z" fill="#e84040"/><path d="M8 3 Q9.8 2.2 9.8 4 Q9.8 5 8.4 6.3 H10 V7.2 H7.6 V6.3 Q9 5 9 4 Q9 3.4 8 3.8Z" fill="#d83030"/><rect x="6.2" y="2.2" width="0.7" height="6.3" fill="#9a9a9a"/><rect x="2.2" y="8.7" width="8.6" height="1.3" fill="#707070" opacity="0.5"/></svg>
<div style="left:393.75px;top:388.66px;font-size:6.90px;line-height:7.93px;color:#222;transform:scaleX(0.9624);transform-origin:0 0;letter-spacing:0.25px;-webkit-text-stroke:0.2px #222;">Sex:</div>
<div style="left:425px;top:387px;width:51px;height:12px;background:linear-gradient(#e6e6e6,#d3d3d3);border:1px solid #c4c4c4;box-sizing:border-box;border-radius:2px;box-shadow:0 1px 0 rgba(0,0,0,0.08);"></div>
<div style="left:429.70px;top:389.29px;font-size:7.20px;line-height:8.28px;color:#4d4d4d;transform:scaleX(0.8900);transform-origin:0 0;">Unassigned</div>
<svg style="left:466.7px;top:391.5px" width="5" height="3" viewBox="0 0 5 3"><path d="M0.4 0.4 L2.5 2.4 L4.6 0.4" fill="none" stroke="#4a4a4a" stroke-width="1"/></svg>
<div style="left:238.00px;top:403.66px;font-size:6.90px;line-height:7.93px;color:#222;transform:scaleX(0.8192);transform-origin:0 0;letter-spacing:0.25px;-webkit-text-stroke:0.2px #222;">S.S.</div>
<div style="left:302.00px;top:404.10px;font-size:7.00px;line-height:8.05px;color:#7d1a1e;font-weight:bold;">:</div>
<div style="left:306px;top:401px;width:50px;height:12px;background:#fff;border:1px solid #c2c2c2;border-top-color:#a8a8a8;box-sizing:border-box;border-radius:2px;box-shadow:0 1px 0 rgba(0,0,0,0.05);"></div>
<div style="left:238.00px;top:415.66px;font-size:6.90px;line-height:7.93px;color:#7d1a1e;transform:scaleX(1.0287);transform-origin:0 0;letter-spacing:0.25px;-webkit-text-stroke:0.2px #7d1a1e;">Subscriber</div>
<div style="left:238.00px;top:424.16px;font-size:6.90px;line-height:7.93px;color:#7d1a1e;transform:scaleX(1.0162);transform-origin:0 0;letter-spacing:0.25px;-webkit-text-stroke:0.2px #7d1a1e;">Address</div>
<div style="left:302.00px;top:420.60px;font-size:7.00px;line-height:8.05px;color:#7d1a1e;font-weight:bold;">:</div>
<div style="left:306px;top:418px;width:82px;height:12px;background:#fff;border:1px solid #c2c2c2;border-top-color:#a8a8a8;box-sizing:border-box;border-radius:2px;box-shadow:0 1px 0 rgba(0,0,0,0.05);"></div>
<div style="left:393.75px;top:420.41px;font-size:6.90px;line-height:7.93px;color:#7d1a1e;transform:scaleX(1.0242);transform-origin:0 0;letter-spacing:0.25px;-webkit-text-stroke:0.2px #7d1a1e;">State:</div>
<div style="left:425px;top:417px;width:26px;height:14px;background:#2674ec;"></div>
<div style="left:431.77px;top:420.40px;font-size:7.00px;line-height:8.05px;color:#fff;-webkit-text-stroke:0.15px #fff;">Add</div>
<div style="left:453px;top:417px;width:73px;height:12px;background:linear-gradient(#e6e6e6,#d3d3d3);border:1px solid #c4c4c4;box-sizing:border-box;border-radius:2px;box-shadow:0 1px 0 rgba(0,0,0,0.08);"></div>
<div style="left:457.70px;top:419.29px;font-size:7.20px;line-height:8.28px;color:#4d4d4d;transform:scaleX(0.8900);transform-origin:0 0;">Unassigned</div>
<svg style="left:516.7px;top:421.5px" width="5" height="3" viewBox="0 0 5 3"><path d="M0.4 0.4 L2.5 2.4 L4.6 0.4" fill="none" stroke="#4a4a4a" stroke-width="1"/></svg>
<div style="left:238.00px;top:437.91px;font-size:6.90px;line-height:7.93px;color:#7d1a1e;transform:scaleX(1.1643);transform-origin:0 0;letter-spacing:0.25px;-webkit-text-stroke:0.2px #7d1a1e;">City</div>
<div style="left:302.00px;top:438.60px;font-size:7.00px;line-height:8.05px;color:#7d1a1e;font-weight:bold;">:</div>
<div style="left:306px;top:436px;width:50px;height:12px;background:#fff;border:1px solid #c2c2c2;border-top-color:#a8a8a8;box-sizing:border-box;border-radius:2px;box-shadow:0 1px 0 rgba(0,0,0,0.05);"></div>
<div style="left:393.75px;top:437.91px;font-size:6.90px;line-height:7.93px;color:#7d1a1e;transform:scaleX(1.0062);transform-origin:0 0;letter-spacing:0.25px;-webkit-text-stroke:0.2px #7d1a1e;">Country:</div>
<div style="left:425px;top:434px;width:26px;height:15px;background:#2674ec;"></div>
<div style="left:431.77px;top:437.90px;font-size:7.00px;line-height:8.05px;color:#fff;-webkit-text-stroke:0.15px #fff;">Add</div>
<div style="left:453px;top:434px;width:51px;height:13px;background:linear-gradient(#e6e6e6,#d3d3d3);border:1px solid #c4c4c4;box-sizing:border-box;border-radius:2px;box-shadow:0 1px 0 rgba(0,0,0,0.08);"></div>
<div style="left:457.70px;top:436.79px;font-size:7.20px;line-height:8.28px;color:#4d4d4d;transform:scaleX(0.8900);transform-origin:0 0;">Unassigned</div>
<svg style="left:494.7px;top:439.0px" width="5" height="3" viewBox="0 0 5 3"><path d="M0.4 0.4 L2.5 2.4 L4.6 0.4" fill="none" stroke="#4a4a4a" stroke-width="1"/></svg>
<div style="left:238.00px;top:453.16px;font-size:6.90px;line-height:7.93px;color:#7d1a1e;letter-spacing:0.25px;-webkit-text-stroke:0.2px #7d1a1e;">Zip Code</div>
<div style="left:302.00px;top:453.60px;font-size:7.00px;line-height:8.05px;color:#7d1a1e;font-weight:bold;">:</div>
<div style="left:306px;top:451px;width:46px;height:12px;background:#fff;border:1px solid #c2c2c2;border-top-color:#a8a8a8;box-sizing:border-box;border-radius:2px;box-shadow:0 1px 0 rgba(0,0,0,0.05);"></div>
<div style="left:238.00px;top:469.16px;font-size:6.90px;line-height:7.93px;color:#222;transform:scaleX(1.0238);transform-origin:0 0;letter-spacing:0.25px;-webkit-text-stroke:0.2px #222;">Subscriber Phone</div>
<div style="left:302.00px;top:469.60px;font-size:7.00px;line-height:8.05px;color:#7d1a1e;font-weight:bold;">:</div>
<div style="left:308px;top:467px;width:82px;height:12px;background:#fff;border:1px solid #c2c2c2;border-top-color:#a8a8a8;box-sizing:border-box;border-radius:2px;box-shadow:0 1px 0 rgba(0,0,0,0.05);"></div>
<div style="left:393.75px;top:469.16px;font-size:6.90px;line-height:7.93px;color:#222;transform:scaleX(0.9118);transform-origin:0 0;letter-spacing:0.25px;-webkit-text-stroke:0.2px #222;">CoPay:</div>
<div style="left:420px;top:467px;width:31px;height:12px;background:#fff;border:1px solid #c2c2c2;border-top-color:#a8a8a8;box-sizing:border-box;border-radius:2px;box-shadow:0 1px 0 rgba(0,0,0,0.05);"></div>
<div style="left:238.00px;top:483.16px;font-size:6.90px;line-height:7.93px;color:#7d1a1e;transform:scaleX(1.1507);transform-origin:0 0;letter-spacing:0.25px;-webkit-text-stroke:0.2px #7d1a1e;">Accept</div>
<div style="left:238.00px;top:491.91px;font-size:6.90px;line-height:7.93px;color:#7d1a1e;transform:scaleX(1.0441);transform-origin:0 0;letter-spacing:0.25px;-webkit-text-stroke:0.2px #7d1a1e;">Assignment</div>
<div style="left:302.00px;top:487.60px;font-size:7.00px;line-height:8.05px;color:#7d1a1e;font-weight:bold;">:</div>
<div style="left:306px;top:486px;width:28px;height:12px;background:linear-gradient(#e6e6e6,#d3d3d3);border:1px solid #c4c4c4;box-sizing:border-box;border-radius:2px;box-shadow:0 1px 0 rgba(0,0,0,0.08);"></div>
<div style="left:310.70px;top:488.29px;font-size:7.20px;line-height:8.28px;color:#4d4d4d;transform:scaleX(0.8900);transform-origin:0 0;">YES</div>
<svg style="left:324.7px;top:490.5px" width="5" height="3" viewBox="0 0 5 3"><path d="M0.4 0.4 L2.5 2.4 L4.6 0.4" fill="none" stroke="#4a4a4a" stroke-width="1"/></svg>
<div style="left:238.00px;top:502.41px;font-size:6.90px;line-height:7.93px;color:#222;transform:scaleX(0.9933);transform-origin:0 0;letter-spacing:0.25px;-webkit-text-stroke:0.2px #222;">Secondary</div>
<div style="left:238.00px;top:511.16px;font-size:6.90px;line-height:7.93px;color:#222;transform:scaleX(1.0232);transform-origin:0 0;letter-spacing:0.25px;-webkit-text-stroke:0.2px #222;">Medicare Type</div>
<div style="left:302.00px;top:506.60px;font-size:7.00px;line-height:8.05px;color:#7d1a1e;font-weight:bold;">:</div>
<div style="left:306px;top:504px;width:227px;height:13px;background:linear-gradient(#e6e6e6,#d3d3d3);border:1px solid #c4c4c4;box-sizing:border-box;border-radius:2px;box-shadow:0 1px 0 rgba(0,0,0,0.08);"></div>
<div style="left:310.70px;top:506.79px;font-size:7.20px;line-height:8.28px;color:#4d4d4d;transform:scaleX(0.8900);transform-origin:0 0;">N/A</div>
<svg style="left:523.7px;top:509.0px" width="5" height="3" viewBox="0 0 5 3"><path d="M0.4 0.4 L2.5 2.4 L4.6 0.4" fill="none" stroke="#4a4a4a" stroke-width="1"/></svg>
</body></html>
